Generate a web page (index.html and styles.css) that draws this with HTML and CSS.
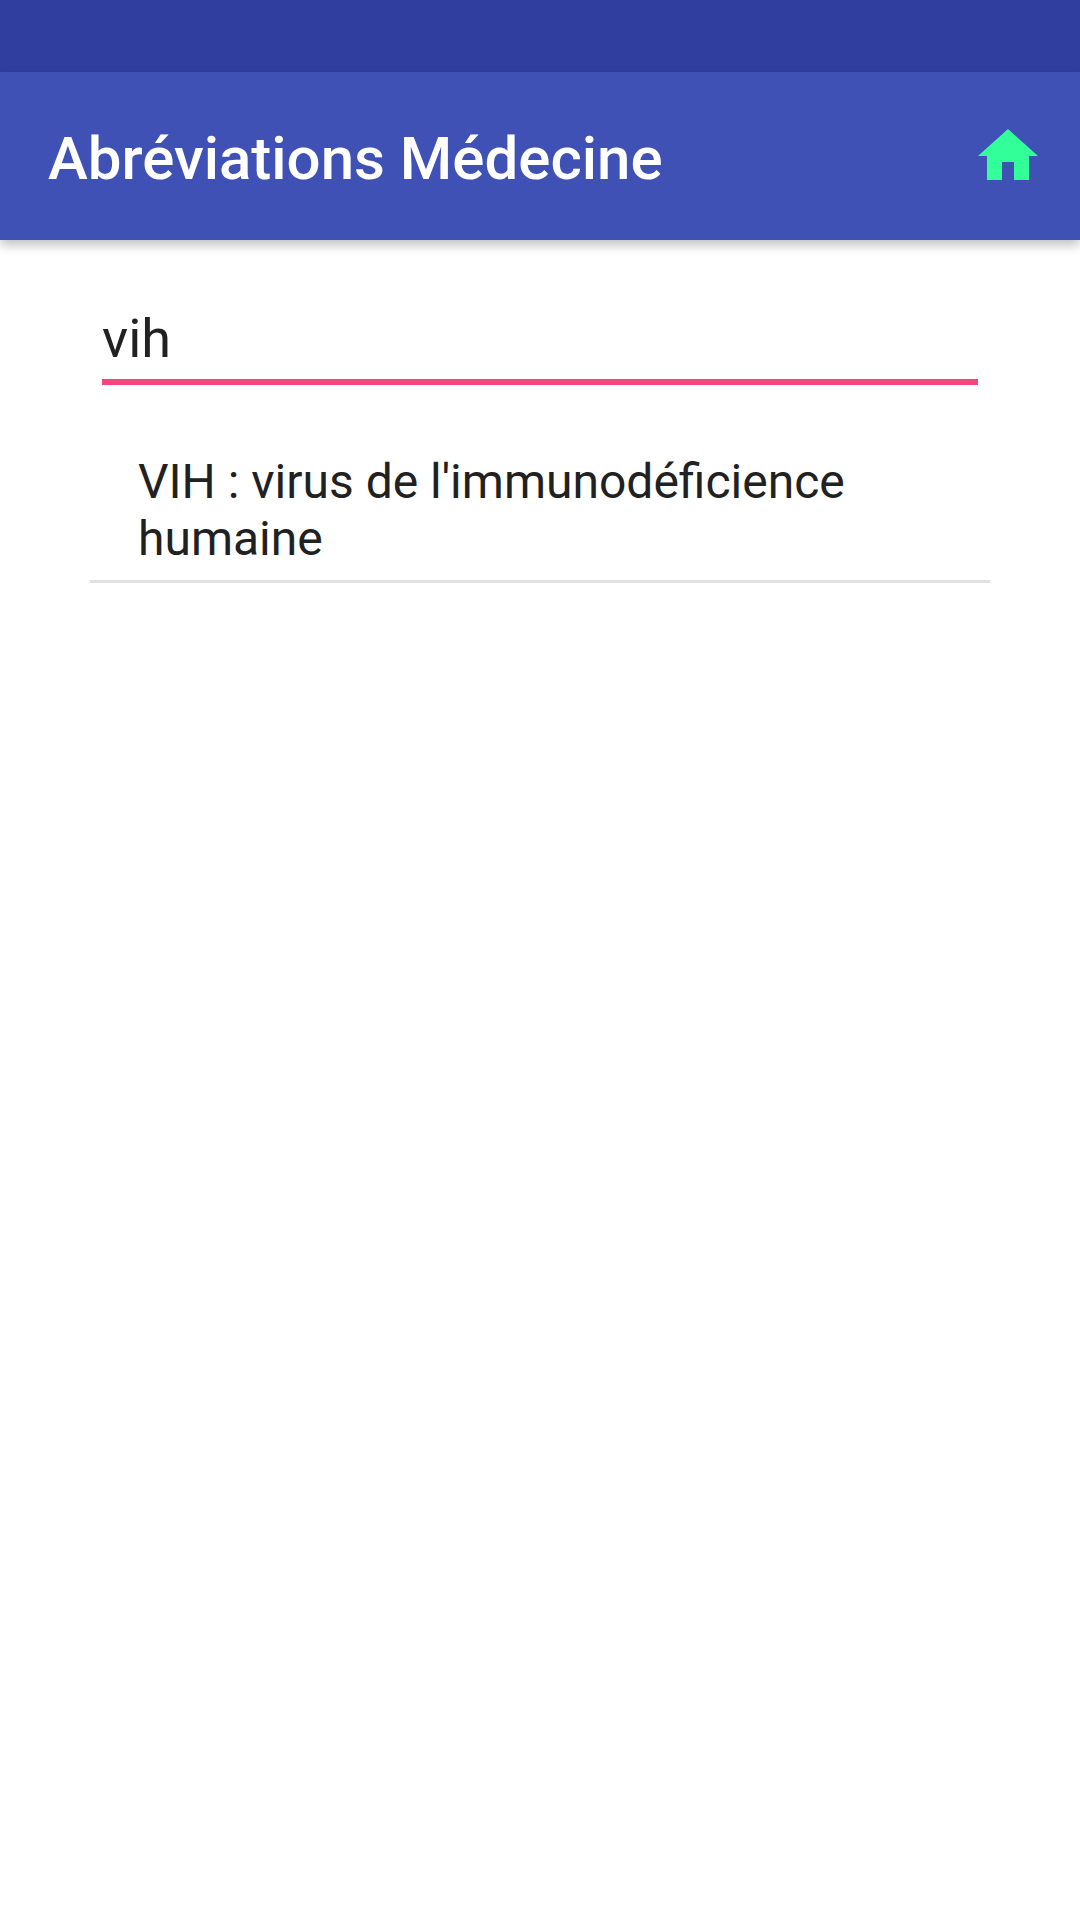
FILE: index.html
```html
<!DOCTYPE html>
<html lang="fr">
<head>
<meta charset="utf-8">
<title>Abréviations Médecine</title>
<link rel="stylesheet" href="styles.css">
</head>
<body>
<div class="status-bar"></div>
<header class="app-bar">
  <h1 class="app-title">Abréviations Médecine</h1>
  <svg class="home-icon" viewBox="2 3 20 17" aria-hidden="true"><path d="M10 20v-6h4v6h5v-8h3L12 3 2 12h3v8z"/></svg>
</header>
<main class="content">
  <div class="search-field">vih</div>
  <ul class="results">
    <li class="result">VIH : virus de l'immunodéficience humaine</li>
  </ul>
</main>
</body>
</html>
```
FILE: styles.css
```css
* { box-sizing: border-box; }
html, body { margin: 0; padding: 0; }
body { width: 1080px; height: 1920px; background: #fff; font-family: Roboto, sans-serif; overflow: hidden; }
.status-bar { height: 72px; background: #303f9f; }
.app-bar { height: 168px; background: #3f51b5; display: flex; align-items: center; justify-content: space-between; padding: 0 42px 0 48px; box-shadow: 0 5px 10px rgba(0,0,0,.25); position: relative; }
.app-title { margin: 4px 0 0; color: #fff; font-size: 60px; font-weight: 500; }
.home-icon { width: 60px; height: 51px; fill: #33ff99; margin-bottom: 3px; }
.content { padding: 60px 90px 0; }
.search-field { height: 85px; font-size: 54px; line-height: 78px; color: #212121; margin: 0 12px; border-bottom: 6px solid #f8437f; }
.results { list-style: none; margin: 54px 0 0; padding: 0; }
.result { font-size: 48px; line-height: 57px; color: #212121; padding: 14px 48px 13px 48px; border-bottom: 3px solid #e0e0e0; }
```
